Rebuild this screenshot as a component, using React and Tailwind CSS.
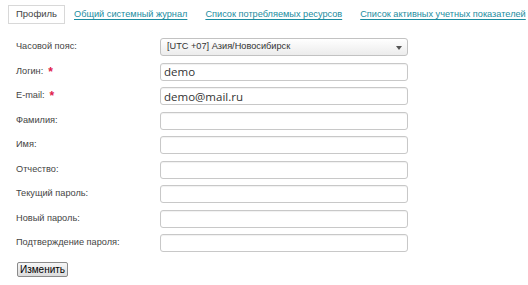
const rows = [
    { label: "Логин:", value: "demo", required: true },
    { label: "E-mail:", value: "demo@mail.ru", required: true },
    { label: "Фамилия:", value: "" },
    { label: "Имя:", value: "" },
    { label: "Отчество:", value: "" },
    { label: "Текущий пароль:", value: "", type: "password" },
    { label: "Новый пароль:", value: "", type: "password" },
    { label: "Подтверждение пароля:", value: "", type: "password" },
];

const tabs = [
    "Общий системный журнал",
    "Список потребляемых ресурсов",
    "Список активных учетных показателей",
];

function Field({ label, value, required, type }) {
    return (
        <>
            <div className="flex items-center whitespace-nowrap text-[9.2px] text-[#444]">
                {label}
                {required && (
                    <span className="ml-[5px] text-[12px] font-bold leading-none text-[#e0204a]">*</span>
                )}
            </div>
            <input
                type={type || "text"}
                defaultValue={value}
                className="h-[18px] w-[248px] rounded-[3px] border border-[#c8c8c8] bg-white px-[3px] text-[11.5px] text-[#333] outline-none shadow-[inset_0_1px_1px_rgba(0,0,0,0.06)]"
                style={{ fontFamily: "'Open Sans', sans-serif" }}
            />
        </>
    );
}

export default function App() {
    return (
        <div
            className="h-[285px] w-[528px] bg-white"
            style={{ fontFamily: "'Liberation Sans', Arial, sans-serif" }}
        >
            <div className="flex items-center pl-[8px] pt-[5px]">
                <div className="flex h-[19px] w-[57px] shrink-0 items-center justify-center whitespace-nowrap border border-[#d8d8d8] text-[9.5px] text-[#444]">
                    Профиль
                </div>
                <div className="ml-[9px] flex gap-[18px]">
                    {tabs.map((t) => (
                        <a
                            key={t}
                            href="#"
                            className="whitespace-nowrap text-[9.2px] text-[#1b8ca0] underline underline-offset-[2px]"
                        >
                            {t}
                        </a>
                    ))}
                </div>
            </div>

            <div className="mt-[14px] grid grid-cols-[144px_248px] gap-y-[6.5px] pl-[16px]">
                <div className="flex items-center whitespace-nowrap text-[9.2px] text-[#444]">Часовой пояс:</div>
                <div className="relative flex h-[18px] w-[248px] items-center whitespace-nowrap rounded-[3px] border border-[#c2c2c2] bg-gradient-to-b from-white to-[#ececec] pl-[6px] text-[9.2px] text-[#333]">
                    [UTC +07] Азия/Новосибирск
                    <span className="absolute right-[5px] top-[7px] h-0 w-0 border-x-[3px] border-t-[4px] border-x-transparent border-t-[#555]" />
                </div>
                {rows.map((r) => (
                    <Field key={r.label} {...r} />
                ))}
            </div>

            <div className="mt-[10px] flex pl-[17px]">
                <button className="flex h-[15px] w-[51px] items-center justify-center rounded-[2px] border border-[#8a8a8a] bg-gradient-to-b from-[#f6f6f6] to-[#dcdcdc] text-[10px] leading-none text-black">
                    Изменить
                </button>
            </div>
        </div>
    );
}
